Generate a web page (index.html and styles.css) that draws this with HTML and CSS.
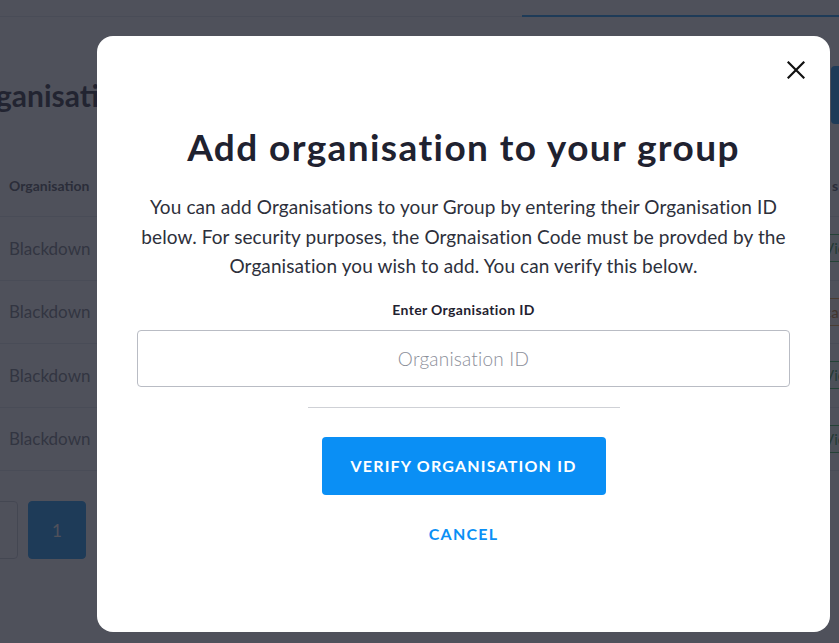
FILE: index.html
```html
<!DOCTYPE html>
<html lang="en">
<head>
    <meta charset="UTF-8">
    <meta name="viewport" content="width=device-width, initial-scale=1.0">
    <title>Group Organisations</title>
    <link rel="stylesheet" href="styles.css">
</head>
<body>
    <div class="page">
        <div class="topbar">
            <div class="tab-active"></div>
        </div>

        <div class="page-head">
            <h2 class="page-title">Organisations</h2>
            <button class="add-btn">Add</button>
        </div>

        <div class="org-table">
            <div class="row head">
                <span class="cell-name">Organisation</span>
                <span class="cell-status">s</span>
            </div>
            <div class="row">
                <span class="cell-name">Blackdown</span>
                <span class="cell-status"><span class="badge ok">View</span></span>
            </div>
            <div class="row">
                <span class="cell-name">Blackdown</span>
                <span class="cell-status"><span class="badge wait">cancel</span></span>
            </div>
            <div class="row">
                <span class="cell-name">Blackdown</span>
                <span class="cell-status"><span class="badge ok">View</span></span>
            </div>
            <div class="row">
                <span class="cell-name">Blackdown</span>
                <span class="cell-status"><span class="badge ok">View</span></span>
            </div>
        </div>

        <div class="pager">
            <span class="pg-box"></span>
            <span class="pg-box current">1</span>
        </div>
    </div>

    <div class="overlay">
        <div class="modal">
            <button class="modal-close" aria-label="Close">
                <svg width="18" height="18" viewBox="0 0 18 18">
                    <path d="M1.5 1.5 L16.5 16.5 M16.5 1.5 L1.5 16.5" stroke="#111" stroke-width="2.2" stroke-linecap="square" fill="none"/>
                </svg>
            </button>

            <h1 class="modal-title">Add organisation to your group</h1>
            <p class="modal-text">
                You can add Organisations to your Group by entering their Organisation ID<br>
                below. For security purposes, the Orgnaisation Code must be provded by the<br>
                Organisation you wish to add. You can verify this below.
            </p>

            <label for="org-id" class="field-label">Enter Organisation ID</label>
            <input type="text" id="org-id" class="field-input" placeholder="Organisation ID">

            <hr class="divider">

            <button class="btn-verify">Verify organisation ID</button>
            <button class="btn-cancel">Cancel</button>
        </div>
    </div>
</body>
</html>
```

FILE: styles.css
```css
* {
    box-sizing: border-box;
}

body {
    margin: 0;
    font-family: "Lato", "Open Sans", sans-serif;
    background-color: #fff;
    color: #1f2230;
    overflow: hidden;
}

/* pagina de fondo */
.page {
    width: 839px;
    height: 643px;
    overflow: hidden;
}

.topbar {
    height: 17px;
    border-bottom: 1px solid #e2e4e9;
    display: flex;
    justify-content: flex-end;
}

.tab-active {
    width: 317px;
    height: 17px;
    border-bottom: 2px solid #0a8ff0;
    margin-bottom: -1px;
}

.page-head {
    display: flex;
    align-items: center;
    justify-content: space-between;
    height: 58px;
    margin-top: 49px;
}

.page-title {
    margin: 0 0 0 -39px;
    font-size: 30px;
    font-weight: 700;
    color: #1f2230;
    white-space: nowrap;
}

.add-btn {
    height: 58px;
    width: 8px;
    padding: 0;
    border: none;
    border-radius: 4px 0 0 4px;
    background-color: #0a8ff0;
    color: transparent;
}

.org-table {
    margin-top: 31px;
}

.row {
    display: flex;
    align-items: center;
    height: 63.5px;
    border-bottom: 1px solid #e2e4e9;
    font-size: 17px;
    color: #71747e;
}

.row.head {
    height: 62px;
    font-size: 14px;
    font-weight: 700;
    color: #4a4d58;
}

.cell-name {
    padding-left: 9px;
    flex: 1;
}

.cell-status {
    width: 16px;
    white-space: nowrap;
}

.row.head .cell-status {
    padding-left: 9px;
}

.badge {
    display: inline-block;
    margin-left: -8px;
    padding: 4px 10px 4px 8px;
    border-radius: 4px;
    font-size: 15px;
    line-height: 18px;
}

.badge.ok {
    border: 1px solid #2fb24c;
    color: #2a8c3f;
    background-color: #eef9f0;
}

.badge.wait {
    border: 1px solid #e39a3b;
    color: #b8721c;
    background-color: #fdf4e8;
}

.pager {
    display: flex;
    gap: 10px;
    margin-top: 30px;
    margin-left: -40px;
}

.pg-box {
    width: 58px;
    height: 58px;
    border: 1px solid #c9ccd3;
    border-radius: 4px;
    display: flex;
    align-items: center;
    justify-content: center;
    font-size: 17px;
    color: #fff;
}

.pg-box.current {
    background-color: #0a8ff0;
    border-color: #0a8ff0;
}

/* modal */
.overlay {
    position: fixed;
    inset: 0;
    background-color: rgba(35, 38, 50, 0.8);
    padding: 36px 0 0 97px;
}

.modal {
    position: relative;
    width: 733px;
    height: 596px;
    background-color: #fff;
    border-radius: 16px;
    padding: 89px 40px 0;
    display: flex;
    flex-direction: column;
    align-items: center;
}

.modal-close {
    position: absolute;
    top: 25px;
    right: 25px;
    width: 18px;
    height: 18px;
    padding: 0;
    border: none;
    background: none;
    cursor: pointer;
}

.modal-close svg {
    display: block;
}

.modal-title {
    margin: 0;
    font-size: 37px;
    line-height: 44px;
    font-weight: 700;
    letter-spacing: 1.4px;
    color: #1f2230;
}

.modal-text {
    margin: 23px 0 0;
    font-size: 19px;
    line-height: 29.5px;
    letter-spacing: 0.1px;
    text-align: center;
    color: #2d303b;
    white-space: nowrap;
}

.field-label {
    margin-top: 20px;
    font-size: 14px;
    line-height: 18px;
    font-weight: 700;
    letter-spacing: 0.35px;
    color: #1f2230;
}

.field-input {
    margin-top: 11px;
    width: 100%;
    height: 57px;
    border: 1.5px solid #b9bcc4;
    border-radius: 4px;
    font-family: inherit;
    font-size: 19px;
    letter-spacing: 0.2px;
    text-align: center;
    color: #1f2230;
}

.field-input::placeholder {
    color: #8b8e99;
    font-weight: 300;
}

.divider {
    margin: 20px 0 0;
    width: 312px;
    border: none;
    border-top: 1px solid #cfd1d6;
}

.btn-verify {
    margin-top: 29px;
    width: 284px;
    height: 58px;
    border: none;
    border-radius: 4px;
    background-color: #0a8ff5;
    color: #fff;
    font-family: inherit;
    font-size: 16px;
    font-weight: 700;
    letter-spacing: 1.2px;
    text-transform: uppercase;
    cursor: pointer;
}

.btn-cancel {
    margin-top: 29px;
    padding: 0;
    border: none;
    background: none;
    color: #0a8ff5;
    font-family: inherit;
    font-size: 16px;
    line-height: 20px;
    font-weight: 700;
    letter-spacing: 1.2px;
    text-transform: uppercase;
    cursor: pointer;
}
```
